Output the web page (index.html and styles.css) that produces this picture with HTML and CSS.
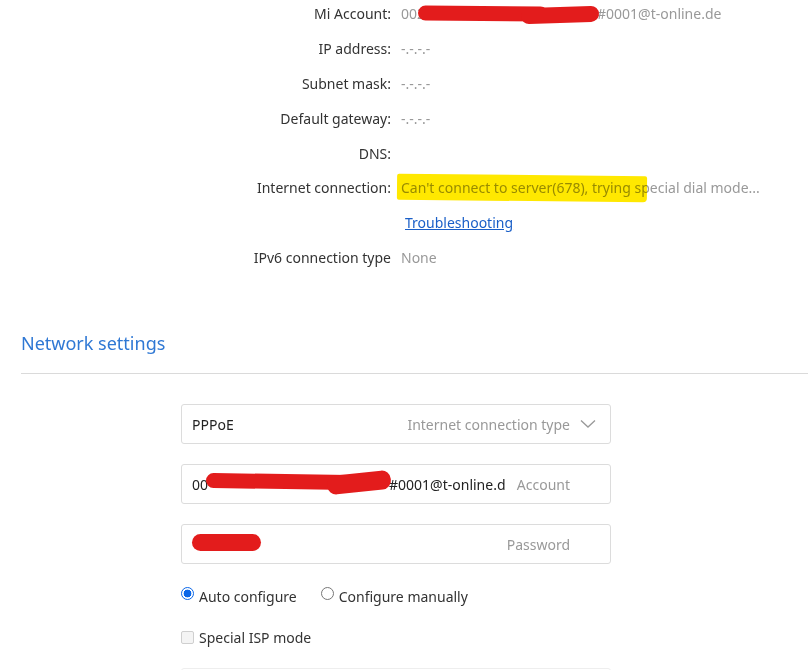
FILE: index.html
```html
<!DOCTYPE html>
<html>
<head>
<meta charset="utf-8">
<link rel="stylesheet" href="styles.css">
</head>
<body>
<div class="info">
  <div class="label">Mi Account:</div>
  <div class="value mark">002<span class="gap gap-acc"></span>#0001@t-online.de<i class="red red-acc"></i><i class="red red-acc2"></i></div>
  <div class="label">IP address:</div>
  <div class="value">-.-.-.-</div>
  <div class="label">Subnet mask:</div>
  <div class="value">-.-.-.-</div>
  <div class="label">Default gateway:</div>
  <div class="value">-.-.-.-</div>
  <div class="label">DNS:</div>
  <div class="value"></div>
  <div class="label">Internet connection:</div>
  <div class="value mark">Can't connect to server(678), trying special dial mode...<i class="yellow"></i></div>
  <div class="label"></div>
  <div class="value"><a class="link" href="#">Troubleshooting</a></div>
  <div class="label">IPv6 connection type</div>
  <div class="value">None</div>
</div>

<h2 class="section-title">Network settings</h2>
<div class="divider"></div>

<div class="form">
  <div class="field">
    <span class="field-val">PPPoE</span>
    <span class="field-hint">Internet connection type</span>
    <svg class="chev" width="16" height="10" viewBox="0 0 16 10"><path d="M1 1.5 L8 8 L15 1.5" fill="none" stroke="#999" stroke-width="1.3"/></svg>
  </div>
  <div class="field mark">
    <span class="field-val">00<span class="gap gap-field"></span>#0001@t-online.d</span>
    <span class="field-hint hint-pad">Account</span>
    <i class="red red-field"></i><i class="red red-field2"></i>
  </div>
  <div class="field mark">
    <span class="field-val"></span>
    <span class="field-hint hint-pad">Password</span>
    <i class="red red-pass"></i>
  </div>
  <div class="radios">
    <label class="opt"><span class="radio on"></span>Auto configure</label>
    <label class="opt"><span class="radio"></span>Configure manually</label>
  </div>
  <label class="opt check-row"><span class="check"></span>Special ISP mode</label>
  <div class="field next"></div>
</div>
</body>
</html>
```

FILE: styles.css
```css
html, body {
  margin: 0;
  padding: 0;
  background: #fff;
  font-family: "Noto Sans", "Open Sans", sans-serif;
  font-size: 14px;
  color: #333;
  overflow: hidden;
  height: 670px;
}

.info {
  display: grid;
  grid-template-columns: 391px 1fr;
  grid-auto-rows: 34.9px;
  column-gap: 10px;
  margin-top: -4px;
  align-items: center;
}

.label {
  text-align: right;
  color: #333;
  white-space: nowrap;
}

.value {
  color: #999;
  white-space: nowrap;
}

.mark { position: relative; }

.gap { display: inline-block; }
.gap-acc { width: 172px; }
.gap-field { width: 181px; }

.red {
  position: absolute;
  background: #e31c1c;
  border-radius: 9px;
  display: block;
}

.red-acc {
  left: 17px;
  top: 2px;
  width: 130px;
  height: 15px;
  transform: rotate(0.5deg);
}

.red-acc2 {
  left: 120px;
  top: 3px;
  width: 78px;
  height: 16px;
  transform: rotate(-2deg);
}

.yellow {
  position: absolute;
  left: -4px;
  top: -3px;
  width: 250px;
  height: 26px;
  background: #ffe800;
  display: block;
  border-radius: 2px 2px 4px 2px;
  mix-blend-mode: multiply;
  transform: rotate(0.6deg);
}

.link {
  margin-left: 4px;
  color: #1a5fc8;
  text-decoration: underline;
}

.section-title {
  margin: 55px 0 0 21px;
  font-size: 18px;
  font-weight: normal;
  color: #2f78d4;
  line-height: 26px;
}

.divider {
  margin: 17px 0 0 21px;
  height: 1px;
  background: #dadada;
}

.form {
  margin: 30px 0 0 181px;
  width: 430px;
  display: flex;
  flex-direction: column;
}

.field {
  height: 40px;
  box-sizing: border-box;
  border: 1px solid #dcdcdc;
  border-radius: 3px;
  display: flex;
  align-items: center;
  padding: 0 14px 0 10px;
  margin-bottom: 20px;
  flex-shrink: 0;
}

.field-val {
  flex: 1;
  color: #222;
  white-space: nowrap;
  overflow: hidden;
}

.field-hint {
  color: #999;
  margin-left: 6px;
  margin-right: 10px;
  white-space: nowrap;
}

.field-hint.hint-pad { margin-right: 26px; }

.red-field {
  left: 24px;
  top: 9px;
  width: 150px;
  height: 15px;
  transform: rotate(0.8deg);
}

.red-field2 {
  left: 145px;
  top: 8px;
  width: 64px;
  height: 19px;
  transform: rotate(-6deg);
}

.red-pass {
  left: 10px;
  top: 9px;
  width: 69px;
  height: 17px;
}

.radios {
  display: flex;
  gap: 24px;
  margin-top: -3px;
  height: 30px;
  align-items: center;
}

.opt {
  display: flex;
  align-items: center;
  color: #333;
}

.radio {
  width: 11px;
  height: 11px;
  border: 1px solid #777;
  border-radius: 50%;
  margin-right: 5px;
  margin-top: -5px;
  box-sizing: content-box;
  display: inline-block;
  background: #fff;
}

.radio.on {
  border-color: #0a66e8;
  background: radial-gradient(circle, #0a66e8 0 3.6px, #fff 4.2px);
}

.check-row {
  margin-top: 11px;
  height: 30px;
}

.check {
  width: 11px;
  height: 11px;
  border: 1px solid #cfcfcf;
  border-radius: 2px;
  background: #f4f4f4;
  margin-right: 5px;
  display: inline-block;
}

.next {
  margin-top: 16px;
  border-color: #eee;
}
```
